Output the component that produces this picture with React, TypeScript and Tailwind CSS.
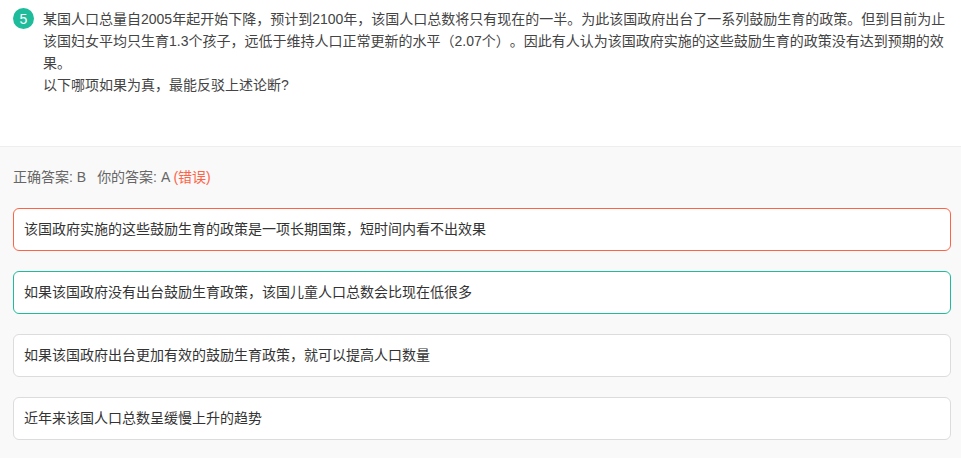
const options = [
  { text: "该国政府实施的这些鼓励生育的政策是一项长期国策\uFF0C短时间内看不出效果", border: "border-[#ff6347]" },
  { text: "如果该国政府没有出台鼓励生育政策\uFF0C该国儿童人口总数会比现在低很多", border: "border-[#1fbc9c]" },
  { text: "如果该国政府出台更加有效的鼓励生育政策\uFF0C就可以提高人口数量", border: "border-[#dcdcdc]" },
  { text: "近年来该国人口总数呈缓慢上升的趋势", border: "border-[#dcdcdc]" },
]

const question =
  "某国人口总量自2005年起开始下降\uFF0C预计到2100年\uFF0C该国人口总数将只有现在的一半。为此该国政府出台了一系列鼓励生育的政策。但到目前为止该国妇女平均只生育1.3个孩子\uFF0C远低于维持人口正常更新的水平\uFF082.07个\uFF09。因此有人认为该国政府实施的这些鼓励生育的政策没有达到预期的效果。"
const prompt = "以下哪项如果为真\uFF0C最能反驳上述论断?"

export default function App() {
  return (
    <div className="w-[961px] h-[458px] overflow-hidden bg-[#f9f9f9] text-sm [text-spacing-trim:space-all] font-['Liberation_Sans','Noto_Sans_CJK_SC',sans-serif]">
      {/* Question */}
      <div className="flex h-[147px] items-start gap-[9px] border-b border-[#eeeeee] bg-white pl-[13px] pr-[15px] pt-2">
        <span className="flex h-[21px] w-[21px] shrink-0 items-center justify-center rounded-full bg-[#1fbc9c] text-white">
          5
        </span>
        <div className="leading-[22px] text-[#444444]">
          <p>{question}</p>
          <p>{prompt}</p>
        </div>
      </div>

      {/* Answers */}
      <div className="pl-[13px] pt-[20px]">
        <p className="leading-[20px] text-[#666666]">
          正确答案: B<span className="ml-[11px]">你的答案: A</span>{" "}
          <span className="text-[#ff6347]">(错误)</span>
        </p>
        <div className="mt-[21px] flex flex-col gap-[20px]">
          {options.map((o) => (
            <div
              key={o.text}
              className={`flex h-[43px] w-[938px] items-center rounded-md border bg-white px-[10px] pb-[2px] text-[#333333] ${o.border}`}
            >
              {o.text}
            </div>
          ))}
        </div>
      </div>
    </div>
  )
}
